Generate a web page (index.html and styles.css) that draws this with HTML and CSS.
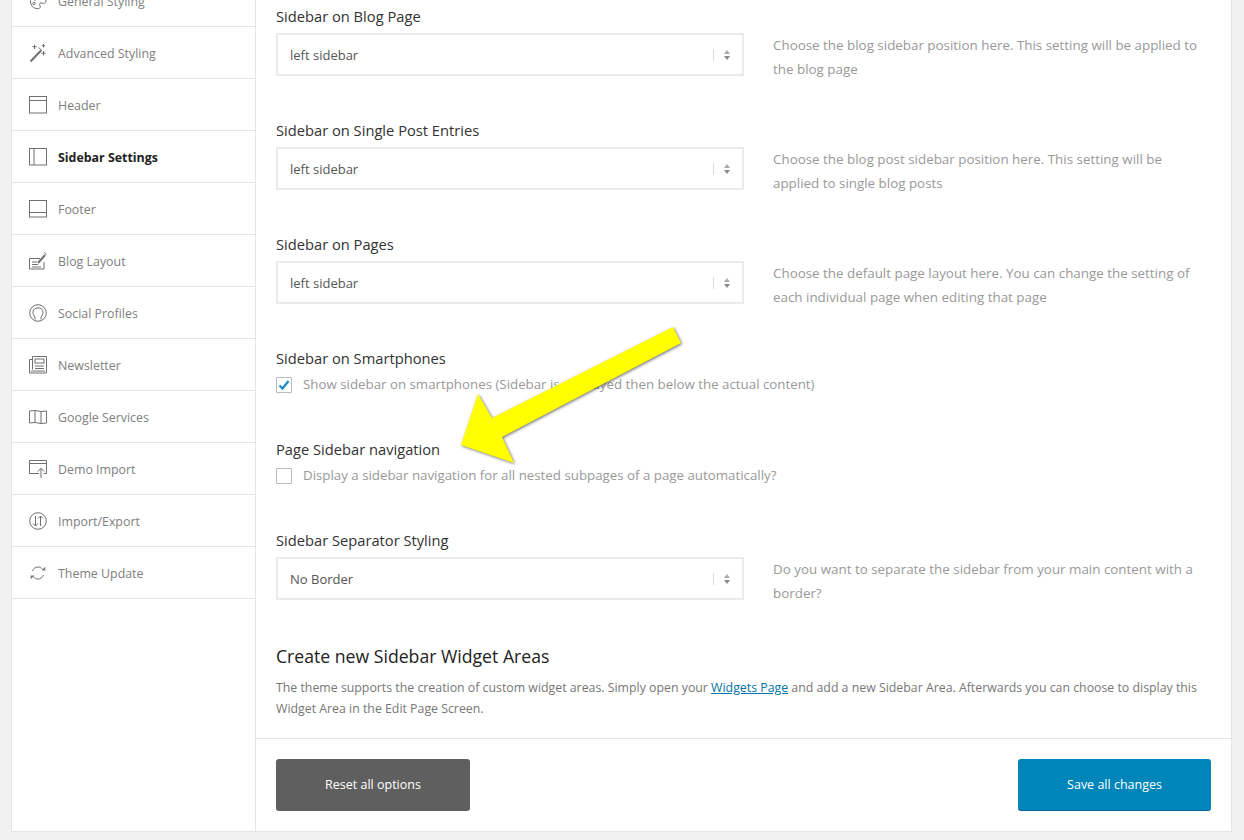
FILE: index.html
```html
<!DOCTYPE html>
<html lang="en">
<head>
<meta charset="utf-8">
<title>Sidebar Settings</title>
<link rel="stylesheet" href="styles.css">
</head>
<body>
<div class="panel">
  <nav class="side">
    <a class="item"><svg class="ico" viewBox="0 0 18 18"><path d="M2 12C0 7 4 2 9 2s8 3 8 7c0 2-2 3-4 2-2-.8-3 1-2 3s-1 3-3 2.600C5 16.300 3 15 2 12z"/><circle cx="6" cy="7" r="1.200"/><circle cx="11" cy="6" r="1.200"/><circle cx="5" cy="11.500" r="1.200"/></svg><span>General Styling</span></a>
    <a class="item"><svg class="ico" viewBox="0 0 18 18"><path class="thick" d="M1.500 17.500 12 6.500"/><path d="M5.500 .5v4.500M3.300 2.700h4.500M14.500 0v3.500M12.700 1.700h3.600M14.500 7v4.500M12.300 9.200h4.500M9.500 3.500l3.500 3"/></svg><span>Advanced Styling</span></a>
    <a class="item"><svg class="ico" viewBox="0 0 18 18"><rect x=".5" y=".5" width="17" height="16.500"/><path d="M.5 4.500h17"/></svg><span>Header</span></a>
    <a class="item active"><svg class="ico" viewBox="0 0 18 18"><rect x=".5" y=".5" width="17" height="16.500"/><path d="M5 .5V17"/></svg><span>Sidebar Settings</span></a>
    <a class="item"><svg class="ico" viewBox="0 0 18 18"><rect x=".5" y=".5" width="17" height="16.500"/><path d="M.5 12.500h17"/></svg><span>Footer</span></a>
    <a class="item"><svg class="ico" viewBox="0 0 18 18"><path d="M11 6.500H.5v10.500h14.500V10"/><path d="M3 10h5M3 12.500h6M3 15h9"/><path class="thick" d="M9 11l7-8"/><path d="M15 .5l2.500 2"/></svg><span>Blog Layout</span></a>
    <a class="item"><svg class="ico" viewBox="0 0 18 18"><circle cx="9" cy="9" r="8.300"/><path d="M6 15.500V13C4.700 12 4 10 4 8c0-2.500 2.300-4.200 5-4.200S14 5.500 14 8c0 2-.7 4-2 5v2.500"/></svg><span>Social Profiles</span></a>
    <a class="item"><svg class="ico" viewBox="0 0 18 18"><path d="M3.500 3.500H.5V17h17V.5h-14V13.500"/><rect x="6" y="3" width="9" height="4"/><path d="M6 10h9M6 12.500h9M2 15h14"/></svg><span>Newsletter</span></a>
    <a class="item"><svg class="ico" viewBox="0 0 18 18"><path d="M.5 3 6 2.500 12 3.500 17.500 3v12L12 15.500 6 14.500 .5 15zM6 2.500v12M12 3.500v12"/></svg><span>Google Services</span></a>
    <a class="item"><svg class="ico" viewBox="0 0 18 18"><path d="M10 13.500H.5V.5h17v13h-3"/><path d="M.5 3.500h17"/><path d="M12 18V8.500M8.800 11.500 12 8.300l3.200 3.200"/></svg><span>Demo Import</span></a>
    <a class="item"><svg class="ico" viewBox="0 0 18 18"><circle cx="9" cy="9" r="8.300"/><path d="M6.500 4v10M4 11.500 6.500 14 9 11.500M11.500 14V4M9 6.500 11.500 4 14 6.500"/></svg><span>Import/Export</span></a>
    <a class="item"><svg class="ico" viewBox="0 0 18 18"><path d="M3.500 7C4.500 4.500 6.500 3 9 3c2 0 3.600 1 4.700 2.500"/><path d="M14.500 11c-1 2.500-3 4-5.500 4-2 0-3.600-1-4.700-2.500"/><path class="fill" d="M12.500 6.500h3.800V2.700zM5.500 11.500H1.700v3.800z"/></svg><span>Theme Update</span></a>
  </nav>
  <main class="main">
    <div class="fields">
      <section class="option">
        <h4 class="label">Sidebar on Blog Page</h4>
        <div class="row">
          <div class="select"><span>left sidebar</span><i class="caret"></i></div>
          <p class="desc">Choose the blog sidebar position here. This setting will be applied to the blog page</p>
        </div>
      </section>
      <section class="option">
        <h4 class="label">Sidebar on Single Post Entries</h4>
        <div class="row">
          <div class="select"><span>left sidebar</span><i class="caret"></i></div>
          <p class="desc">Choose the blog post sidebar position here. This setting will be applied to single blog posts</p>
        </div>
      </section>
      <section class="option">
        <h4 class="label">Sidebar on Pages</h4>
        <div class="row">
          <div class="select"><span>left sidebar</span><i class="caret"></i></div>
          <p class="desc">Choose the default page layout here. You can change the setting of each individual page when editing that page</p>
        </div>
      </section>
      <section class="option check-option">
        <h4 class="label">Sidebar on Smartphones</h4>
        <div class="check">
          <span class="box"><svg viewBox="0 0 14 14"><path d="M2.500 7.500 5.500 10.500 11.500 3"/></svg></span>
          <span class="check-text">Show sidebar on smartphones (Sidebar is displayed then below the actual content)</span>
        </div>
      </section>
      <section class="option check-option">
        <h4 class="label">Page Sidebar navigation</h4>
        <div class="check">
          <span class="box"></span>
          <span class="check-text">Display a sidebar navigation for all nested subpages of a page automatically?</span>
        </div>
      </section>
      <section class="option">
        <h4 class="label">Sidebar Separator Styling</h4>
        <div class="row">
          <div class="select"><span>No Border</span><i class="caret"></i></div>
          <p class="desc">Do you want to separate the sidebar from your main content with a border?</p>
        </div>
      </section>
      <h3 class="title">Create new Sidebar Widget Areas</h3>
      <p class="intro">The theme supports the creation of custom widget areas. Simply open your <a href="#">Widgets Page</a> and add a new Sidebar Area. Afterwards you can choose to display this Widget Area in the Edit Page Screen.</p>
    </div>
    <footer class="actions">
      <button class="btn reset">Reset all options</button>
      <button class="btn save">Save all changes</button>
    </footer>
  </main>
</div>
<svg class="arrow" viewBox="0 0 1244 840"><polygon points="673,327 681,343 502,437 514,463 461,445 478,394 492,418"/></svg>
</body>
</html>
```
FILE: styles.css
```css
* { box-sizing: border-box; }
html, body { margin: 0; height: 840px; overflow: hidden; }
body { background: #f1f1f1; font-family: "Open Sans", "Noto Sans", sans-serif; font-size: 13.300px; color: #777; position: relative; }

.panel { display: flex; width: 1221px; margin: -25px 0 0 11px; background: #fff; border: 1px solid #e5e5e5; border-top: 0; }

.side { width: 244px; flex: none; border-right: 1px solid #e5e5e5; }
.item { display: flex; align-items: center; gap: 11px; height: 52px; padding: 1px 0 0 17px; border-bottom: 1px solid #e5e5e5; color: #808080; font-size: 12.400px; }
.item.active { color: #222; font-weight: 700; }
.ico { width: 18px; height: 18px; flex: none; fill: none; stroke: #707070; stroke-width: 1; overflow: visible; }
.ico .thick { stroke-width: 2; }
.ico .fill { fill: #707070; stroke: none; }

.main { flex: 1; min-width: 0; }
.fields { padding: 32px 20px 19px; border-bottom: 1px solid #e5e5e5; }

.option { margin-bottom: 45px; }
.check-option { margin-bottom: 47px; }
.label { margin: 0 0 8px; font-size: 14.700px; line-height: 18px; font-weight: 500; color: #333; }
.row { display: flex; gap: 29px; height: 43px; }
.select { display: flex; align-items: center; justify-content: space-between; width: 468px; height: 43px; flex: none; padding: 0 12px; border: 2px solid #ebebeb; color: #555; font-size: 13px; }
.caret { position: relative; width: 17px; height: 12px; border-left: 1px solid #ddd; }
.caret::before, .caret::after { content: ""; position: absolute; right: 0; border: 3px solid transparent; }
.caret::before { top: -2px; border-bottom: 4px solid #aaa; }
.caret::after { bottom: -2px; border-top: 4px solid #888; }
.desc { margin: 0; width: 432px; height: 48px; font-size: 13.380px; line-height: 24px; color: #999; }

.check { display: flex; align-items: center; gap: 11px; height: 16px; margin-top: 10px; color: #999; }
.check-text { margin-bottom: 2px; }
.box { width: 16px; height: 16px; flex: none; border: 1px solid #bbb; border-radius: 1px; background: #fff; }
.box svg { display: block; fill: none; stroke: #1e8cbe; stroke-width: 2.200; }

.title { margin: -1px 0 9px; font-size: 17.650px; line-height: 24px; font-weight: 500; color: #222; }
.intro { margin: 0; font-size: 12.340px; line-height: 21px; color: #777; }
.intro a { color: #0073aa; }

.actions { display: flex; justify-content: space-between; padding: 20px; }
.btn { width: 194px; height: 52px; border: 0; border-radius: 3px; color: #fff; font: 500 12.500px "Open Sans", sans-serif; }
.reset { padding-bottom: 2px; background: #5f5f5f; }
.save { width: 193px; background: #0085ba; border-bottom: 1px solid #006799; }

.arrow { position: absolute; inset: 0; width: 1244px; height: 840px; pointer-events: none; }
.arrow polygon { fill: #ffff00; filter: drop-shadow(1px 1px 1.500px rgba(0,0,0,.55)); }
```
